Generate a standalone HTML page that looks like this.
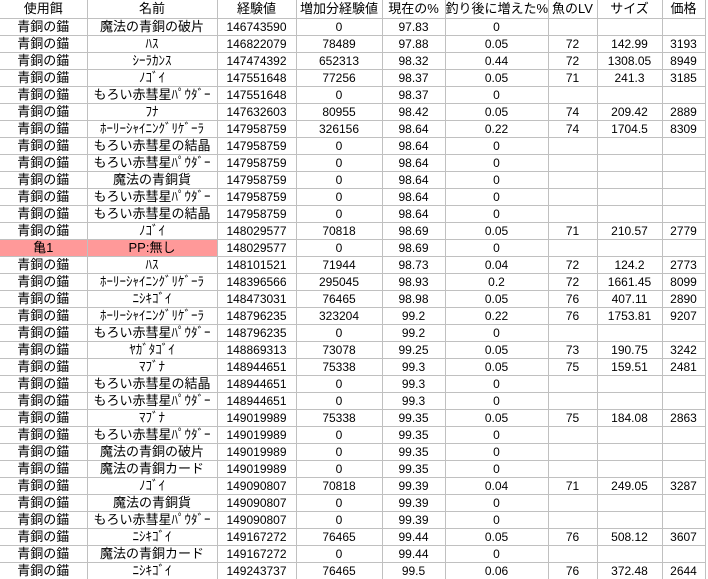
<!DOCTYPE html>
<html><head><meta charset="utf-8">
<style>
html,body{margin:0;padding:0;background:#fff;width:708px;height:579px;overflow:hidden}
table{border-collapse:collapse;table-layout:fixed;width:705px;font-family:"Liberation Sans","Noto Sans CJK JP",sans-serif;font-size:12px;color:#000}
td{border:1px solid #c0c0c0;border-top:none;border-left:none;height:16px;padding:0;text-align:center;white-space:nowrap;overflow:hidden;line-height:16px}
td:nth-child(1),td:nth-child(2){font-size:13px}
tr.h td{height:18px;line-height:18px;font-size:13px}
td.p{background:#ff9999}
</style></head><body>
<table>
<colgroup><col style="width:87px"><col style="width:130px"><col style="width:79px"><col style="width:86px"><col style="width:63px"><col style="width:103px"><col style="width:49px"><col style="width:65px"><col style="width:43px"></colgroup>
<tr class="h"><td>使用餌</td><td>名前</td><td>経験値</td><td>増加分経験値</td><td>現在の%</td><td>釣り後に増えた%</td><td>魚のLV</td><td>サイズ</td><td>価格</td></tr>
<tr><td>青銅の錨</td><td>魔法の青銅の破片</td><td>146743590</td><td>0</td><td>97.83</td><td>0</td><td></td><td></td><td></td></tr>
<tr><td>青銅の錨</td><td>ﾊｽ</td><td>146822079</td><td>78489</td><td>97.88</td><td>0.05</td><td>72</td><td>142.99</td><td>3193</td></tr>
<tr><td>青銅の錨</td><td>ｼｰﾗｶﾝｽ</td><td>147474392</td><td>652313</td><td>98.32</td><td>0.44</td><td>72</td><td>1308.05</td><td>8949</td></tr>
<tr><td>青銅の錨</td><td>ﾉｺﾞｲ</td><td>147551648</td><td>77256</td><td>98.37</td><td>0.05</td><td>71</td><td>241.3</td><td>3185</td></tr>
<tr><td>青銅の錨</td><td>もろい赤彗星ﾊﾟｳﾀﾞｰ</td><td>147551648</td><td>0</td><td>98.37</td><td>0</td><td></td><td></td><td></td></tr>
<tr><td>青銅の錨</td><td>ﾌﾅ</td><td>147632603</td><td>80955</td><td>98.42</td><td>0.05</td><td>74</td><td>209.42</td><td>2889</td></tr>
<tr><td>青銅の錨</td><td>ﾎｰﾘｰｼｬｲﾆﾝｸﾞﾘｹﾞｰﾗ</td><td>147958759</td><td>326156</td><td>98.64</td><td>0.22</td><td>74</td><td>1704.5</td><td>8309</td></tr>
<tr><td>青銅の錨</td><td>もろい赤彗星の結晶</td><td>147958759</td><td>0</td><td>98.64</td><td>0</td><td></td><td></td><td></td></tr>
<tr><td>青銅の錨</td><td>もろい赤彗星ﾊﾟｳﾀﾞｰ</td><td>147958759</td><td>0</td><td>98.64</td><td>0</td><td></td><td></td><td></td></tr>
<tr><td>青銅の錨</td><td>魔法の青銅貨</td><td>147958759</td><td>0</td><td>98.64</td><td>0</td><td></td><td></td><td></td></tr>
<tr><td>青銅の錨</td><td>もろい赤彗星ﾊﾟｳﾀﾞｰ</td><td>147958759</td><td>0</td><td>98.64</td><td>0</td><td></td><td></td><td></td></tr>
<tr><td>青銅の錨</td><td>もろい赤彗星の結晶</td><td>147958759</td><td>0</td><td>98.64</td><td>0</td><td></td><td></td><td></td></tr>
<tr><td>青銅の錨</td><td>ﾉｺﾞｲ</td><td>148029577</td><td>70818</td><td>98.69</td><td>0.05</td><td>71</td><td>210.57</td><td>2779</td></tr>
<tr><td class="p">亀1</td><td class="p">PP:無し</td><td>148029577</td><td>0</td><td>98.69</td><td>0</td><td></td><td></td><td></td></tr>
<tr><td>青銅の錨</td><td>ﾊｽ</td><td>148101521</td><td>71944</td><td>98.73</td><td>0.04</td><td>72</td><td>124.2</td><td>2773</td></tr>
<tr><td>青銅の錨</td><td>ﾎｰﾘｰｼｬｲﾆﾝｸﾞﾘｹﾞｰﾗ</td><td>148396566</td><td>295045</td><td>98.93</td><td>0.2</td><td>72</td><td>1661.45</td><td>8099</td></tr>
<tr><td>青銅の錨</td><td>ﾆｼｷｺﾞｲ</td><td>148473031</td><td>76465</td><td>98.98</td><td>0.05</td><td>76</td><td>407.11</td><td>2890</td></tr>
<tr><td>青銅の錨</td><td>ﾎｰﾘｰｼｬｲﾆﾝｸﾞﾘｹﾞｰﾗ</td><td>148796235</td><td>323204</td><td>99.2</td><td>0.22</td><td>76</td><td>1753.81</td><td>9207</td></tr>
<tr><td>青銅の錨</td><td>もろい赤彗星ﾊﾟｳﾀﾞｰ</td><td>148796235</td><td>0</td><td>99.2</td><td>0</td><td></td><td></td><td></td></tr>
<tr><td>青銅の錨</td><td>ﾔｶﾞﾀｺﾞｲ</td><td>148869313</td><td>73078</td><td>99.25</td><td>0.05</td><td>73</td><td>190.75</td><td>3242</td></tr>
<tr><td>青銅の錨</td><td>ﾏﾌﾞﾅ</td><td>148944651</td><td>75338</td><td>99.3</td><td>0.05</td><td>75</td><td>159.51</td><td>2481</td></tr>
<tr><td>青銅の錨</td><td>もろい赤彗星の結晶</td><td>148944651</td><td>0</td><td>99.3</td><td>0</td><td></td><td></td><td></td></tr>
<tr><td>青銅の錨</td><td>もろい赤彗星ﾊﾟｳﾀﾞｰ</td><td>148944651</td><td>0</td><td>99.3</td><td>0</td><td></td><td></td><td></td></tr>
<tr><td>青銅の錨</td><td>ﾏﾌﾞﾅ</td><td>149019989</td><td>75338</td><td>99.35</td><td>0.05</td><td>75</td><td>184.08</td><td>2863</td></tr>
<tr><td>青銅の錨</td><td>もろい赤彗星ﾊﾟｳﾀﾞｰ</td><td>149019989</td><td>0</td><td>99.35</td><td>0</td><td></td><td></td><td></td></tr>
<tr><td>青銅の錨</td><td>魔法の青銅の破片</td><td>149019989</td><td>0</td><td>99.35</td><td>0</td><td></td><td></td><td></td></tr>
<tr><td>青銅の錨</td><td>魔法の青銅カード</td><td>149019989</td><td>0</td><td>99.35</td><td>0</td><td></td><td></td><td></td></tr>
<tr><td>青銅の錨</td><td>ﾉｺﾞｲ</td><td>149090807</td><td>70818</td><td>99.39</td><td>0.04</td><td>71</td><td>249.05</td><td>3287</td></tr>
<tr><td>青銅の錨</td><td>魔法の青銅貨</td><td>149090807</td><td>0</td><td>99.39</td><td>0</td><td></td><td></td><td></td></tr>
<tr><td>青銅の錨</td><td>もろい赤彗星ﾊﾟｳﾀﾞｰ</td><td>149090807</td><td>0</td><td>99.39</td><td>0</td><td></td><td></td><td></td></tr>
<tr><td>青銅の錨</td><td>ﾆｼｷｺﾞｲ</td><td>149167272</td><td>76465</td><td>99.44</td><td>0.05</td><td>76</td><td>508.12</td><td>3607</td></tr>
<tr><td>青銅の錨</td><td>魔法の青銅カード</td><td>149167272</td><td>0</td><td>99.44</td><td>0</td><td></td><td></td><td></td></tr>
<tr><td>青銅の錨</td><td>ﾆｼｷｺﾞｲ</td><td>149243737</td><td>76465</td><td>99.5</td><td>0.06</td><td>76</td><td>372.48</td><td>2644</td></tr>
</table>
</body></html>
